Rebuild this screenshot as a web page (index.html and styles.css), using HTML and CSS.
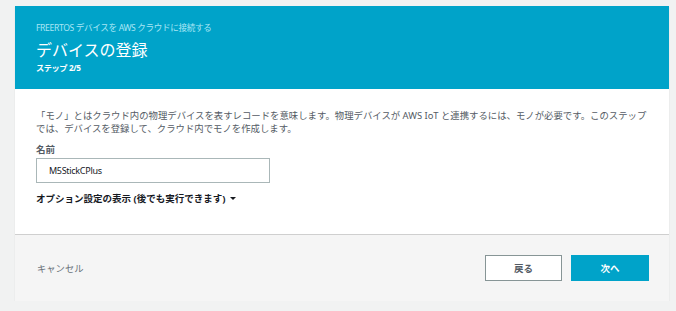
FILE: index.html
```html
<!DOCTYPE html>
<html lang="ja">
<head>
<meta charset="utf-8">
<link rel="stylesheet" href="styles.css">
</head>
<body>
<div class="card">
  <div class="header">
    <div class="eyebrow">FREERTOS デバイスを AWS クラウドに接続する</div>
    <div class="title">デバイスの登録</div>
    <div class="step">ステップ 2/5</div>
  </div>
  <div class="body">
    <p class="desc">「モノ」とはクラウド内の物理デバイスを表すレコードを意味します。物理デバイスが AWS IoT と連携するには、モノが必要です。このステップでは、デバイスを登録して、クラウド内でモノを作成します。</p>
    <div class="label">名前</div>
    <div class="input">M5StickCPlus</div>
    <div class="options">オプション設定の表示 (後でも実行できます) <span class="caret"></span></div>
  </div>
  <div class="footer">
    <span class="cancel">キャンセル</span>
    <div class="actions">
      <div class="btn btn-back">戻る</div>
      <div class="btn btn-next">次へ</div>
    </div>
  </div>
</div>
</body>
</html>
```
FILE: styles.css
```css
* { box-sizing: border-box; }
html, body { margin: 0; padding: 0; }
body {
  background: #f1f2f2;
  font-family: "Noto Sans", "Noto Sans CJK JP", sans-serif;
  font-size: 9.5px;
  color: #16191f;
  padding: 6px 7px 0 15px;
}
.card {
  width: 654px;
  background: #fff;
  box-shadow: 0 1px 1px rgba(0,0,0,0.12);
}
.header {
  background: #00a3c9;
  height: 83px;
  padding: 15px 21px 0;
  color: #fff;
}
.eyebrow {
  color: #a8e6f5;
  font-size: 8.6px;
  line-height: 14px;
  letter-spacing: -0.35px;
}
.title {
  font-size: 16px;
  line-height: 24px;
  margin-top: 3px;
}
.step {
  font-size: 8.2px;
  font-weight: bold;
  line-height: 11px;
  letter-spacing: -0.4px;
}
.body {
  padding: 20px 21px 0;
  height: 146px;
  border-bottom: 1px solid #cfcfcf;
}
.desc {
  margin: 0;
  color: #545b64;
  font-size: 9.4px;
  line-height: 13px;
}
.label {
  margin-top: 8px;
  font-size: 9.5px;
  line-height: 13px;
  color: #545b64;
  font-weight: bold;
}
.input {
  margin-top: 2px;
  width: 234px;
  height: 25px;
  border: 1px solid #aab7b8;
  padding: 0 12px;
  line-height: 23px;
  font-size: 9px;
  letter-spacing: -0.3px;
  color: #16191f;
}
.options {
  margin-top: 9px;
  font-weight: bold;
  font-size: 9.5px;
  line-height: 13px;
  display: flex;
  align-items: center;
  gap: 5px;
}
.caret {
  width: 0; height: 0;
  border-left: 3px solid transparent;
  border-right: 3px solid transparent;
  border-top: 3px solid #16191f;
}
.footer {
  background: #f5f5f5;
  height: 66px;
  padding: 0 20px 0 22px;
  display: flex;
  align-items: center;
  justify-content: space-between;
}
.cancel {
  color: #687078;
  font-size: 9.3px;
}
.actions {
  display: flex;
  gap: 9px;
}
.btn {
  height: 26px;
  display: flex;
  align-items: center;
  justify-content: center;
  font-weight: bold;
  font-size: 9.5px;
}
.btn-back {
  width: 77px;
  border: 1px solid #879596;
  color: #545b64;
  background: #fff;
}
.btn-next {
  width: 78px;
  background: #00a3c9;
  color: #fff;
}
```
